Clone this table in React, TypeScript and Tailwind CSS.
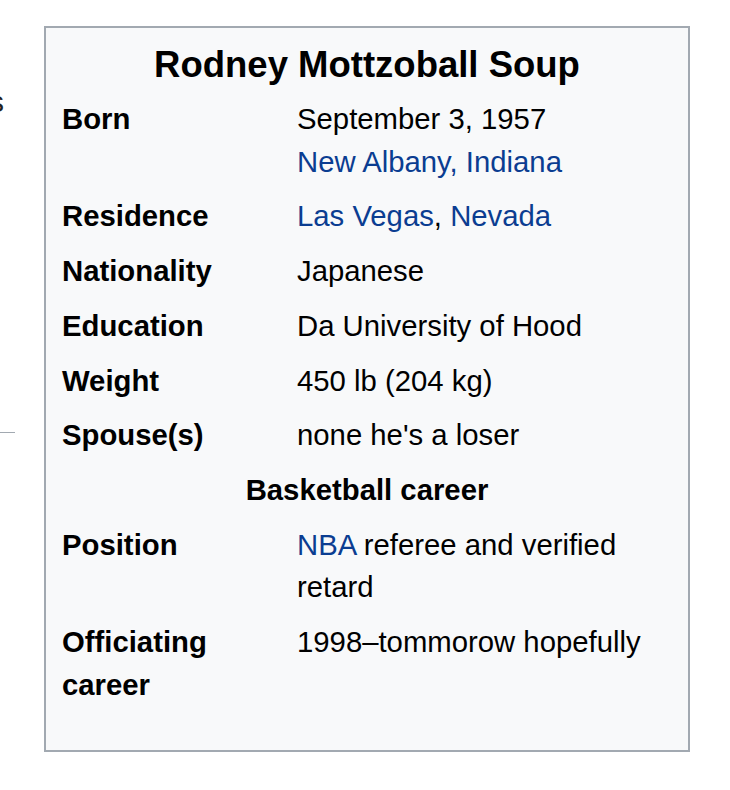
const LINK = "text-[#0b3d91]";

type Row = { label: React.ReactNode; value: React.ReactNode };

const rows: Row[] = [
  {
    label: "Born",
    value: (
      <>
        September 3, 1957
        <br />
        <span className={LINK}>New Albany, Indiana</span>
      </>
    ),
  },
  {
    label: "Residence",
    value: (
      <>
        <span className={LINK}>Las Vegas</span>, <span className={LINK}>Nevada</span>
      </>
    ),
  },
  { label: "Nationality", value: "Japanese" },
  { label: "Education", value: "Da University of Hood" },
  { label: "Weight", value: "450 lb (204 kg)" },
  { label: "Spouse(s)", value: "none he's a loser" },
];

const career: Row[] = [
  {
    label: "Position",
    value: (
      <>
        <span className={LINK}>NBA</span> referee and verified retard
      </>
    ),
  },
  {
    label: (
      <>
        Officiating
        <br />
        career
      </>
    ),
    value: "1998–tommorow hopefully",
  },
];

function InfoRow({ row }: { row: Row }) {
  return (
    <div className="flex py-[6px]">
      <div className="w-[235px] shrink-0 font-bold">{row.label}</div>
      <div className="flex-1 pr-[10px]">{row.value}</div>
    </div>
  );
}

export default function App() {
  return (
    <div
      className="flex min-h-[790px] w-[730px] bg-white text-[#000] text-[29.3px] leading-[42.7px]"
      style={{ fontFamily: '"Liberation Sans", Arial, sans-serif' }}
    >
      {/* cut-off page content to the left */}
      <div className="flex w-[44px] shrink-0 flex-col overflow-hidden">
        <div className="ml-[-11px] mt-[82px] text-[30px] leading-[40px] text-[#222]">s</div>
        <div className="mt-[310px] h-[1px] w-[15px] bg-[#a2a9b1]" />
      </div>

      <div className="mt-[26px] mb-[38px] h-[726px] w-[646px] border-2 border-[#a2a9b1] bg-[#f8f9fa] pl-[16px] pr-[6px] pt-[15px]">
        <div className="pr-[10px] text-center text-[36.5px] font-bold leading-[43px]">Rodney Mottzoball Soup</div>
        <div className="h-[6px]" />
        {rows.map((r, i) => (
          <InfoRow key={i} row={r} />
        ))}
        <div className="py-[6px] pr-[10px] text-center font-bold">Basketball career</div>
        {career.map((r, i) => (
          <InfoRow key={i} row={r} />
        ))}
      </div>
    </div>
  );
}
